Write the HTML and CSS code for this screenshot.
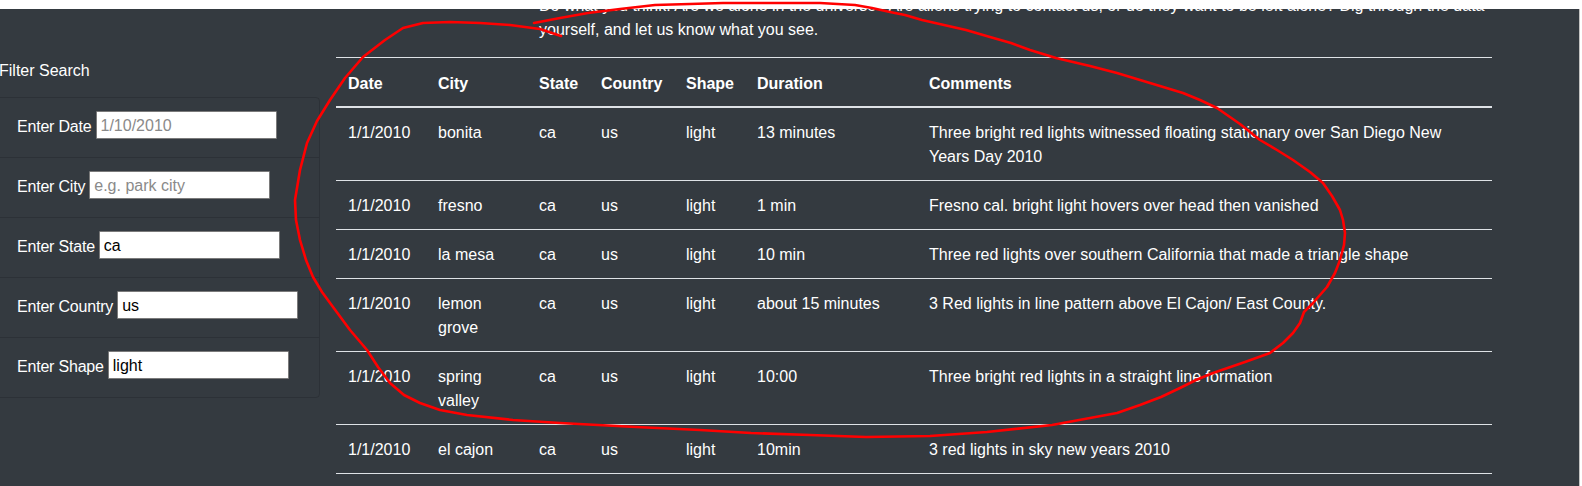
FILE: index.html
```html
<!DOCTYPE html>
<html lang="en">
<head>
<meta charset="utf-8">
<title>UFO Sightings</title>
<link rel="stylesheet" href="styles.css">
</head>
<body>
<div class="topbar"></div>
<main class="page">
  <p class="intro">Do what you think! Are we alone in the universe? Are aliens trying to contact us, or do they want to be left alone? Dig through the data<br>yourself, and let us know what you see.</p>
  <div class="content">
    <aside class="filters">
      <h5 class="filters-title">Filter Search</h5>
      <ul class="filter-list">
        <li class="filter-item"><label for="datetime">Enter Date</label><input id="datetime" type="text" placeholder="1/10/2010"></li>
        <li class="filter-item"><label for="city">Enter City</label><input id="city" type="text" placeholder="e.g. park city"></li>
        <li class="filter-item"><label for="state">Enter State</label><input id="state" type="text" value="ca"></li>
        <li class="filter-item"><label for="country">Enter Country</label><input id="country" type="text" value="us"></li>
        <li class="filter-item"><label for="shape">Enter Shape</label><input id="shape" type="text" value="light"></li>
      </ul>
    </aside>
    <table class="ufo-table">
      <colgroup>
        <col class="c-date"><col class="c-city"><col class="c-state"><col class="c-country"><col class="c-shape"><col class="c-duration"><col class="c-comments">
      </colgroup>
      <thead>
        <tr><th>Date</th><th>City</th><th>State</th><th>Country</th><th>Shape</th><th>Duration</th><th>Comments</th></tr>
      </thead>
      <tbody>
        <tr><td>1/1/2010</td><td>bonita</td><td>ca</td><td>us</td><td>light</td><td>13 minutes</td><td>Three bright red lights witnessed floating stationary over San Diego New<br>Years Day 2010</td></tr>
        <tr><td>1/1/2010</td><td>fresno</td><td>ca</td><td>us</td><td>light</td><td>1 min</td><td>Fresno cal. bright light hovers over head then vanished</td></tr>
        <tr><td>1/1/2010</td><td>la mesa</td><td>ca</td><td>us</td><td>light</td><td>10 min</td><td>Three red lights over southern California that made a triangle shape</td></tr>
        <tr><td>1/1/2010</td><td>lemon grove</td><td>ca</td><td>us</td><td>light</td><td>about 15 minutes</td><td>3 Red lights in line pattern above El Cajon/ East County.</td></tr>
        <tr><td>1/1/2010</td><td>spring valley</td><td>ca</td><td>us</td><td>light</td><td>10:00</td><td>Three bright red lights in a straight line formation</td></tr>
        <tr><td>1/1/2010</td><td>el cajon</td><td>ca</td><td>us</td><td>light</td><td>10min</td><td>3 red lights in sky new years 2010</td></tr>
      </tbody>
    </table>
  </div>
</main>
<svg class="scribble" width="1582" height="486" viewBox="0 0 1582 486" aria-hidden="true">
  <polyline fill="none" stroke="#ff0000" stroke-width="2.6" stroke-linecap="round" stroke-linejoin="round"
    points="561,36 540,29 510,25 480,23 450,22 423,23 403,28 385,40 363,57 345,78 330,100 317,121 307,143 300,170 295,200 296,220 300,240 306,260 313,277 322,292 333,307 350,330 367,350 378,367 390,383 404,395 420,403 440,410 467,415 513,420 560,423 636,427 700,430 751,433 810,435 866,437 930,436 987,432 1052,425 1090,418 1117,413 1140,405 1161,397 1180,388 1196,380 1213,373 1245,362 1270,353 1283,343 1293,333 1300,323 1304,312 1313,303 1320,295 1327,287 1335,273 1340,260 1344,245 1345,233 1343,220 1340,210 1332,196 1323,183 1310,172 1293,160 1277,150 1260,140 1240,124 1217,108 1200,100 1183,93 1150,83 1117,73 1090,66 1056,58 1030,50 1011,43 990,37 966,30 944,25 922,20 905,15 890,12 872,8 855,5 820,3 791,3 757,3 723,3 690,4 655,5 620,9 588,13 560,18 534,23"/>
</svg>
</body>
</html>
```

FILE: styles.css
```css
html {
  background: #ffffff;
}

body {
  margin: 0 2px 0 0;
  min-height: 486px;
  background: #343a40;
  border-right: 1px solid #c3c3c3;
  color: #ffffff;
  font-family: "Liberation Sans", Arial, sans-serif;
  font-size: 16px;
  line-height: 24px;
  overflow: hidden;
}

.topbar {
  position: fixed;
  top: 0;
  left: 0;
  right: 0;
  height: 9px;
  background: #ffffff;
  z-index: 5;
}

.page {
  display: flow-root;
}

.intro {
  margin: -6px 0 15px 539px;
  white-space: nowrap;
}

.content {
  display: flex;
  align-items: flex-start;
  gap: 16px;
  margin-left: -4px;
}

.filters {
  width: 324px;
  flex: none;
}

.filters-title {
  margin: 2px 0 14px 3px;
  font-size: 16px;
  font-weight: normal;
  line-height: 24px;
}

.filter-list {
  list-style: none;
  margin: 0;
  padding: 0;
  border: 1px solid rgba(0, 0, 0, 0.14);
  border-radius: 4px;
}

.filter-item {
  display: flex;
  align-items: center;
  gap: 4px;
  height: 28px;
  padding: 13px 20px 18px;
  border-top: 1px solid rgba(0, 0, 0, 0.14);
}

.filter-item:first-child {
  border-top: 0;
}

.filter-item label {
  padding-top: 4px;
  letter-spacing: -0.2px;
  white-space: nowrap;
}

.filter-item input {
  box-sizing: border-box;
  width: 181px;
  height: 28px;
  margin: 0;
  padding: 2px 4px 0;
  border: 1px solid #7a7a7a;
  border-radius: 1px;
  background: #ffffff;
  color: #000000;
  font-family: "Liberation Sans", Arial, sans-serif;
  font-size: 16px;
}

.filter-item input::placeholder {
  color: #8a8a8a;
}

.ufo-table {
  width: 1156px;
  flex: none;
  table-layout: fixed;
  border-collapse: collapse;
  color: #ffffff;
}

.c-date { width: 90px; }
.c-city { width: 101px; }
.c-state { width: 62px; }
.c-country { width: 85px; }
.c-shape { width: 71px; }
.c-duration { width: 172px; }
.c-comments { width: 575px; }

.ufo-table th,
.ufo-table td {
  padding: 13px 12px 11px;
  text-align: left;
  vertical-align: top;
  border-top: 1px solid #dee2e6;
}

.ufo-table th {
  padding: 14px 12px 10px;
  font-weight: bold;
  border-bottom: 2px solid #dee2e6;
}

.ufo-table tbody tr:last-child td {
  border-bottom: 1px solid #dee2e6;
}

.scribble {
  position: absolute;
  top: 0;
  left: 0;
  z-index: 10;
  pointer-events: none;
}
```
